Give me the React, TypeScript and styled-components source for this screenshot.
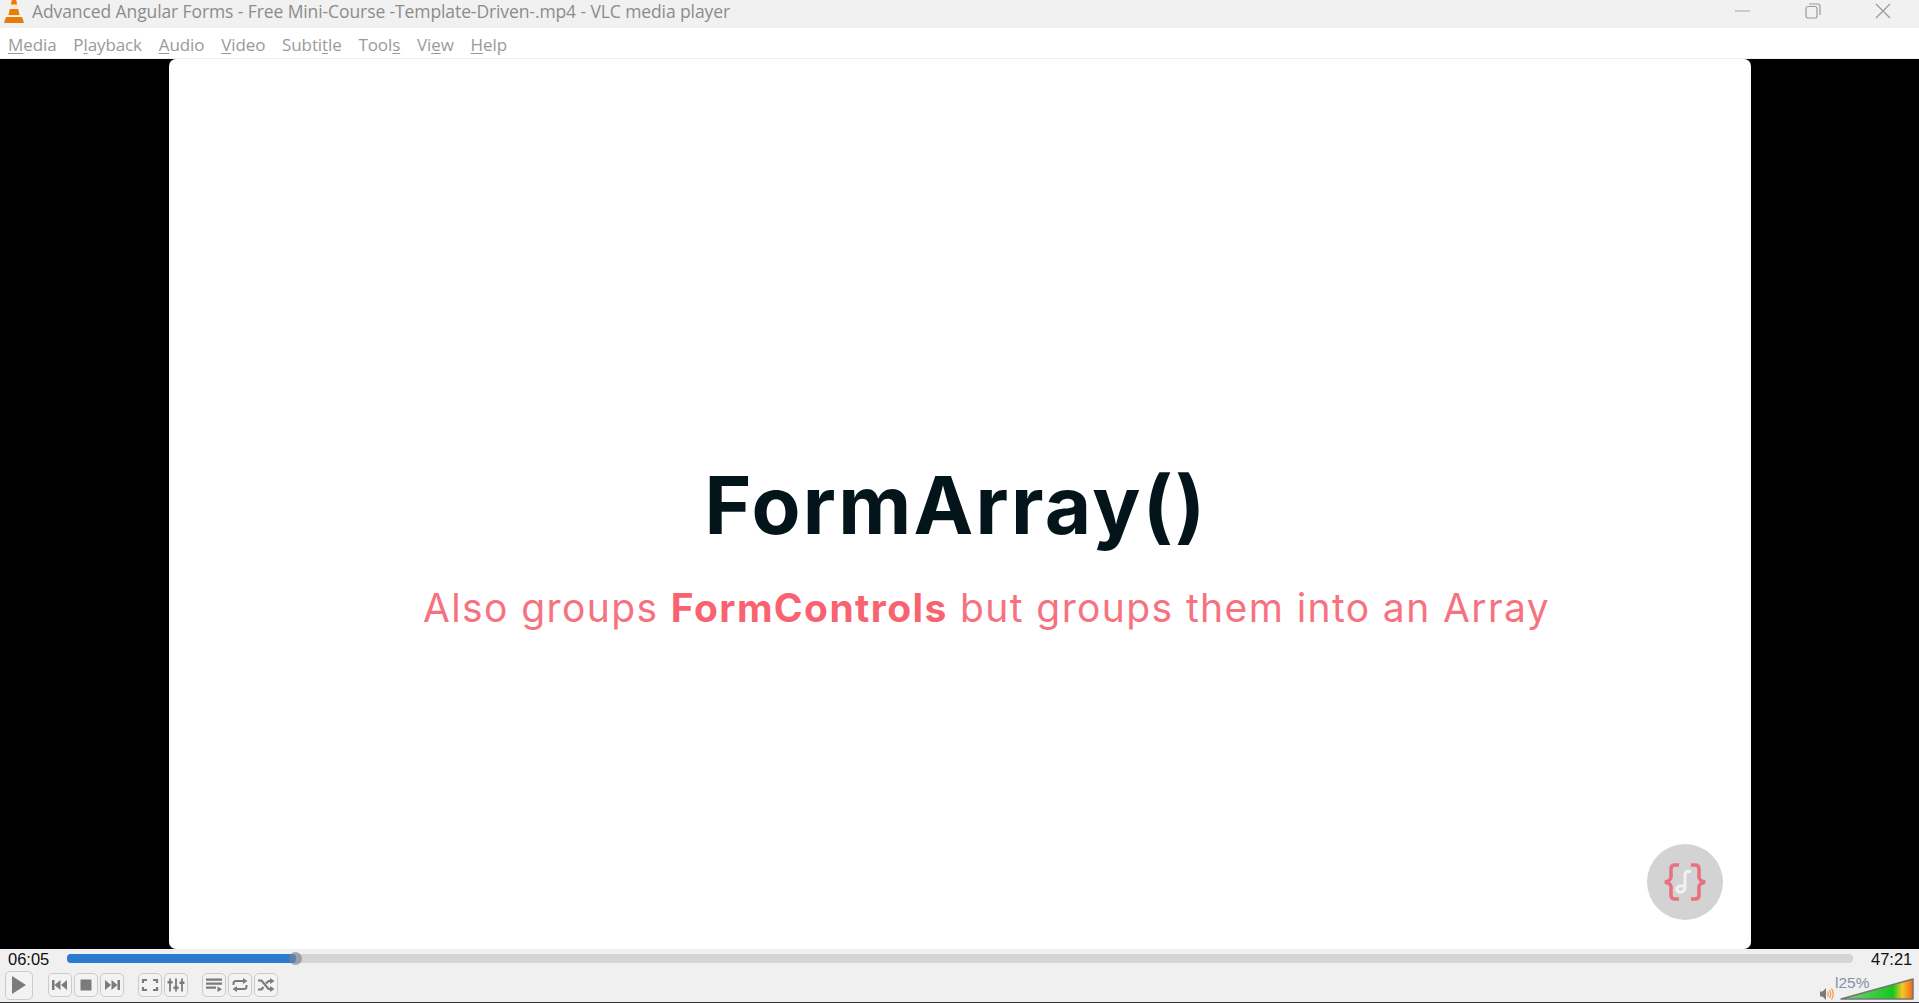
import React, { FC, ReactNode } from "react";
import styled, { createGlobalStyle } from "styled-components";

const GlobalStyle = createGlobalStyle`
  html, body {
    margin: 0;
    padding: 0;
    height: 100%;
    overflow: hidden;
    background: #f0f0f0;
  }
  #root {
    height: 100%;
  }
`;

const menuItems: { key: string; rest: string; before?: string }[] = [
  { before: "", key: "M", rest: "edia" },
  { before: "P", key: "l", rest: "ayback" },
  { before: "", key: "A", rest: "udio" },
  { before: "", key: "V", rest: "ideo" },
  { before: "Subti", key: "t", rest: "le" },
  { before: "Tool", key: "s", rest: "" },
  { before: "Vi", key: "e", rest: "w" },
  { before: "", key: "H", rest: "elp" },
];

const Player = styled.div`
  display: flex;
  flex-direction: column;
  width: 1919px;
  height: 1003px;
  font-family: "Open Sans", "Noto Sans", sans-serif;
`;

const TitleBar = styled.header`
  display: flex;
  align-items: flex-start;
  height: 28px;
  flex: none;
  padding: 0 1px 0 4px;
  background: #f1f1f1;
`;

const Title = styled.div`
  margin-left: 8px;
  flex: 1;
  font-size: 17.5px;
  line-height: 23px;
  letter-spacing: -0.1px;
  color: #8c8c8c;
  white-space: nowrap;
`;

const WindowButton = styled.div`
  display: flex;
  align-items: center;
  justify-content: center;
  width: 70px;
  height: 21px;
`;

const MenuBar = styled.nav`
  display: flex;
  align-items: center;
  gap: 16.8px;
  height: 31px;
  flex: none;
  padding: 2px 0 0 8px;
  background: #fff;
  border-bottom: 1px solid #f0f0f0;
  box-sizing: border-box;
`;

const MenuItem = styled.span`
  font-size: 17px;
  letter-spacing: -0.1px;
  color: #9a9a9a;
  u {
    text-underline-offset: 2px;
    text-decoration-thickness: 1px;
  }
`;

const Video = styled.main`
  flex: 1;
  display: flex;
  justify-content: center;
  background: #000;
`;

const Slide = styled.section`
  position: relative;
  display: flex;
  flex-direction: column;
  align-items: center;
  width: 1582px;
  background: #fff;
  border-radius: 7px;
  box-sizing: border-box;
  padding-top: 396px;
  font-family: "Inter", "Open Sans", sans-serif;
`;

const Heading = styled.h1`
  margin: 0 0 0 -7px;
  font-size: 80px;
  line-height: 100px;
  font-weight: 700;
  letter-spacing: 2.3px;
  color: #04141b;
  white-space: nowrap;
`;

const Subheading = styled.p`
  margin: 28px 0 0 54px;
  font-size: 39px;
  line-height: 50px;
  letter-spacing: 1.4px;
  color: #f7727f;
  white-space: nowrap;
  b {
    font-weight: 700;
    color: #f9636f;
  }
`;

const Badge = styled.div`
  position: absolute;
  right: 28px;
  bottom: 29px;
  width: 76px;
  height: 76px;
  border-radius: 50%;
  background: #d3d3d3;
  display: flex;
  align-items: center;
  justify-content: center;
`;

const Controls = styled.footer`
  flex: none;
  height: 54px;
  box-sizing: border-box;
  background: #f0f0f0;
  border-bottom: 1px solid #333;
  display: flex;
  flex-direction: column;
`;

const SeekRow = styled.div`
  display: flex;
  align-items: center;
  height: 19px;
  padding: 2px 7px 0 8px;
  box-sizing: border-box;
  gap: 18px;
`;

const Time = styled.span`
  font-family: "Liberation Sans", Arial, sans-serif;
  font-size: 16.5px;
  color: #111;
  width: 41px;
`;

const SeekTrack = styled.div`
  flex: 1;
  position: relative;
  height: 9px;
  margin-top: -2px;
  border-radius: 4px;
  background: #d4d4d4;
`;

const SeekFill = styled.div`
  height: 100%;
  border-radius: 4px;
  background: #2a7ad0;
`;

const SeekHandle = styled.div`
  position: absolute;
  top: -2px;
  width: 13px;
  height: 13px;
  margin-left: -7px;
  border-radius: 50%;
  background: rgba(120, 130, 145, 0.65);
`;

const ButtonRow = styled.div`
  display: flex;
  align-items: center;
  height: 34px;
  padding-left: 5px;
`;

const ButtonGroup = styled.div`
  display: flex;
  gap: 2px;
  margin-right: 14px;
  &:first-child {
    margin-right: 15px;
  }
`;

const CtrlButton = styled.div<{ $large?: boolean }>`
  display: flex;
  align-items: center;
  justify-content: center;
  box-sizing: border-box;
  width: ${(p) => (p.$large ? 28 : 24)}px;
  height: ${(p) => (p.$large ? 29 : 24)}px;
  border: 1px solid #cbcbcb;
  border-radius: 5px;
  background: #f3f3f3;
`;

const VolumeArea = styled.div`
  margin-left: auto;
  position: relative;
  display: flex;
  align-items: flex-end;
  gap: 6px;
  padding: 0 5px 2px 0;
  height: 100%;
  box-sizing: border-box;
`;

const VolumeLabel = styled.span`
  position: absolute;
  left: 15px;
  top: 6px;
  font-family: "Liberation Sans", Arial, sans-serif;
  font-size: 15.5px;
  color: #8492a2;
`;

const Cone: FC = () => (
  <svg width="20" height="23" viewBox="0 0 20 23">
    <path d="M7.500 0h5l3.500 16H4z" fill="#f3ede4" />
    <path d="M7.800 0h4.400l.9 4.500H6.900z" fill="#ee7a00" />
    <path d="M5.800 9h8.400l1.300 6H4.500z" fill="#ee7a00" />
    <path d="M0 23l2-6h16l2 6z" fill="#e57b0a" />
  </svg>
);

const Icon: FC<{ children: ReactNode }> = ({ children }) => (
  <svg width="18" height="14" viewBox="0 0 18 14" fill="#7b7b7b" stroke="none">
    {children}
  </svg>
);

const App: FC = () => {
  return (
    <Player>
      <GlobalStyle />
      <TitleBar>
        <Cone />
        <Title>Advanced Angular Forms - Free Mini-Course -Template-Driven-.mp4 - VLC media player</Title>
        <WindowButton>
          <svg width="16" height="2" viewBox="0 0 16 2"><path d="M0 1h15" stroke="#a5a5a5" strokeWidth="1" /></svg>
        </WindowButton>
        <WindowButton>
          <svg width="16" height="16" viewBox="0 0 16 16" fill="none" stroke="#999" strokeWidth="1.2">
            <rect x="1" y="3.500" width="11" height="11.500" rx="2" />
            <path d="M4 1h8.500A2.500 2.500 0 0 1 15 3.500V12" />
          </svg>
        </WindowButton>
        <WindowButton>
          <svg width="16" height="16" viewBox="0 0 16 16" stroke="#999" strokeWidth="1.2"><path d="M1 1l14 14M15 1L1 15" /></svg>
        </WindowButton>
      </TitleBar>
      <MenuBar>
        {menuItems.map((m) => (
          <MenuItem key={m.before + m.key + m.rest}>
            {m.before}<u>{m.key}</u>{m.rest}
          </MenuItem>
        ))}
      </MenuBar>
      <Video>
        <Slide>
          <Heading>FormArray()</Heading>
          <Subheading>Also groups <b>FormControls</b> but groups them into an Array</Subheading>
          <Badge>
            <svg width="56" height="56" viewBox="0 0 56 56" fill="none" strokeWidth="3.500">
              <path d="M22 11h-4c-3 0-4 2-4 4v8c0 3-2 4-6 5 4 1 6 2 6 5v8c0 2 1 4 4 4h4" stroke="#e8707f" />
              <path d="M34 11h4c3 0 4 2 4 4v8c0 3 2 4 6 5-4 1-6 2-6 5v8c0 2-1 4-4 4h-4" stroke="#e8707f" />
              <path d="M34 18c-4-2-6 0-6 3v12c0 5-6 7-8 3-1-3 3-5 7-4" stroke="#f2f2f2" strokeWidth="3" />
            </svg>
          </Badge>
        </Slide>
      </Video>
      <Controls>
        <SeekRow>
          <Time>06:05</Time>
          <SeekTrack>
            <SeekFill style={{ width: "12.8%" }} />
            <SeekHandle style={{ left: "12.8%" }} />
          </SeekTrack>
          <Time>47:21</Time>
        </SeekRow>
        <ButtonRow>
          <ButtonGroup>
            <CtrlButton $large>
              <svg width="14" height="18" viewBox="0 0 14 18"><path d="M0 0l14 9-14 9z" fill="#7b7b7b" /></svg>
            </CtrlButton>
          </ButtonGroup>
          <ButtonGroup>
            <CtrlButton><Icon><path d="M1 2h2.500v10H1zM9.500 2v10L3.500 7zM16 2v10L10 7z" /></Icon></CtrlButton>
            <CtrlButton><Icon><path d="M3.500 1.500h11v11h-11z" /></Icon></CtrlButton>
            <CtrlButton><Icon><path d="M14.500 2H17v10h-2.500zM8.500 2v10l6-5zM2 2v10l6-5z" /></Icon></CtrlButton>
          </ButtonGroup>
          <ButtonGroup>
            <CtrlButton>
              <Icon><path d="M2 5V2h4M12 2h4v3M2 9v3h4M12 12h4V9" fill="none" stroke="#7b7b7b" strokeWidth="2.200" /></Icon>
            </CtrlButton>
            <CtrlButton>
              <Icon>
                <path d="M3 0.500v13M9 0.500v13M15 0.500v13" fill="none" stroke="#7b7b7b" strokeWidth="1.800" />
                <path d="M0.500 3h5v2.500h-5zM6.500 8.500h5V11h-5zM12.500 3.500h5V6h-5z" />
              </Icon>
            </CtrlButton>
          </ButtonGroup>
          <ButtonGroup>
            <CtrlButton><Icon><path d="M1 0.500h16v2.200H1zM1 4.500h16v2.200H1zM1 8.500h10v2.200H1zM12.500 8.500l4.500 2.700-4.500 2.800z" /></Icon></CtrlButton>
            <CtrlButton>
              <Icon>
                <path d="M2.500 7V5.500q0-2.500 2.500-2.500h8M15.500 7v1.500q0 2.500-2.500 2.500H5" fill="none" stroke="#7b7b7b" strokeWidth="2" />
                <path d="M12 0l4.500 3-4.500 3zM6 8l-4.500 3L6 14z" />
              </Icon>
            </CtrlButton>
            <CtrlButton>
              <Icon>
                <path d="M1 2.500h3.500L11.500 11H14M1 11.500h3.500l2-2.500M9 5.500L11.500 3H14" fill="none" stroke="#7b7b7b" strokeWidth="2.200" />
                <path d="M13 0l4.500 3L13 6zM13 8l4.500 3L13 14z" />
              </Icon>
            </CtrlButton>
          </ButtonGroup>
          <VolumeArea>
            <svg width="14" height="12" viewBox="0 0 14 12">
              <path d="M0 3.500h2.500L6 0v12L2.500 8.500H0z" fill="#7b7b7b" />
              <path d="M7.500 3.500q1.500 2.500 0 5M9.500 2q2.500 4 0 8M11.500 0.500q3.500 5.500 0 11" stroke="#f09a38" strokeWidth="1.200" fill="none" />
            </svg>
            <VolumeLabel>l25%</VolumeLabel>
            <svg width="74" height="22" viewBox="0 0 74 22">
              <defs>
                <linearGradient id="volumeGrad" x1="0" x2="1" y1="0" y2="0">
                  <stop offset="0" stopColor="#7fd07f" />
                  <stop offset="0.72" stopColor="#14c81e" />
                  <stop offset="0.85" stopColor="#f4c92a" />
                  <stop offset="1" stopColor="#f2641a" />
                </linearGradient>
              </defs>
              <path d="M1 21L73 1v20z" fill="url(#volumeGrad)" stroke="#757575" strokeWidth="1.500" strokeLinejoin="round" />
            </svg>
          </VolumeArea>
        </ButtonRow>
      </Controls>
    </Player>
  );
};

export default App;
